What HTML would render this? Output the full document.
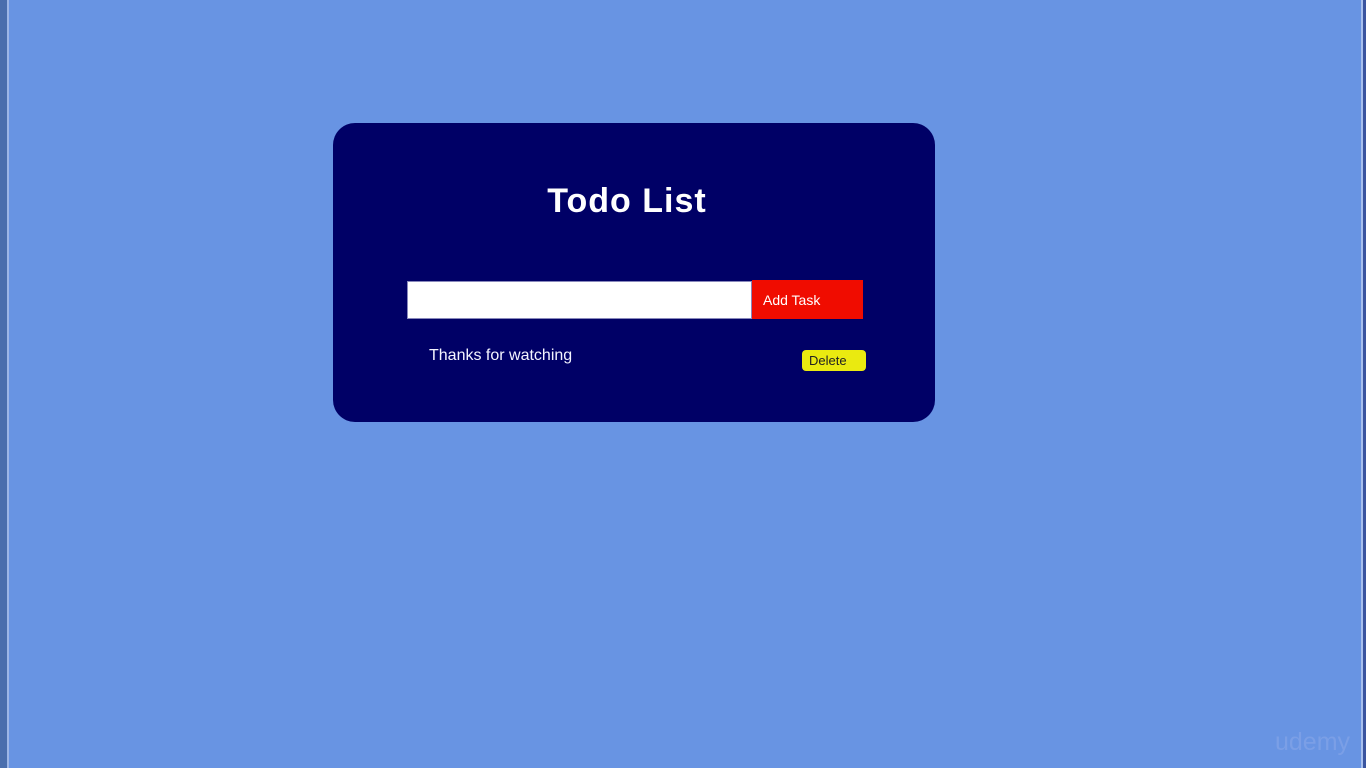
<!DOCTYPE html>
<html><head><style>
html,body{margin:0;padding:0;width:1366px;height:768px;overflow:hidden;background:#6894e3;font-family:"Liberation Sans",sans-serif;}
.l1{position:absolute;left:0;top:0;width:7px;height:768px;background:#4a6ead;}
.l2{position:absolute;left:7px;top:0;width:2px;height:768px;background:#9db6e6;}
.r1{position:absolute;left:1361px;top:0;width:2px;height:768px;background:#a8c0ee;}
.r2{position:absolute;left:1363px;top:0;width:3px;height:768px;background:#3a55a0;}
.card{position:absolute;left:333px;top:123px;width:602px;height:299px;background:#000066;border-radius:22px;}
h1{position:absolute;left:0;width:588px;top:59px;margin:0;text-align:center;color:#fff;font-size:34px;letter-spacing:1px;font-weight:bold;line-height:38px;}
.inp{position:absolute;left:74px;top:158px;width:345px;height:38px;background:#fff;border:1px solid #8888bb;box-sizing:border-box;}
.btn{position:absolute;left:419px;top:157px;width:111px;height:39px;background:#f00c00;color:#fff;font-size:14px;line-height:40px;padding-left:11px;box-sizing:border-box;}
.txt{position:absolute;left:96px;top:224px;color:#f4f4ff;font-size:16px;}
.del{position:absolute;left:469px;top:227px;width:64px;height:21px;background:#eaea10;border-radius:4px;color:#222;font-size:13px;line-height:22px;padding-left:7px;box-sizing:border-box;}
.ud{position:absolute;left:1275px;top:728px;color:#7b9fe6;font-size:25px;}
</style></head><body>
<div class="l1"></div><div class="l2"></div><div class="r1"></div><div class="r2"></div>
<div class="card">
<h1>Todo List</h1>
<div class="inp"></div>
<div class="btn">Add Task</div>
<div class="txt">Thanks for watching</div>
<div class="del">Delete</div>
</div>
<div class="ud">udemy</div>
</body></html>
